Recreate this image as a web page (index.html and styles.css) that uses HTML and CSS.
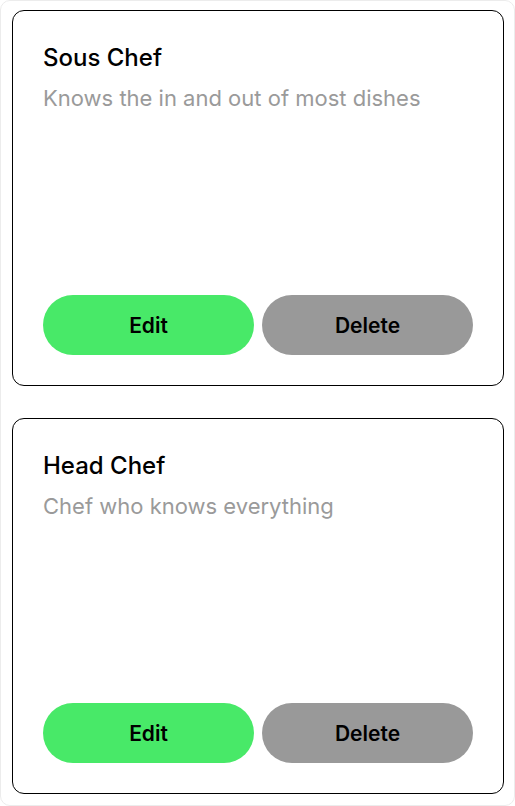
FILE: index.html
```html
<!DOCTYPE html>
<html lang="en">
<head>
<meta charset="UTF-8" />
<meta name="viewport" content="width=device-width, initial-scale=1" />
<title>Roles</title>
<link rel="stylesheet" href="styles.css">
</head>
<body>
  <div class="role-list">
    <div class="role-card">
      <h2 class="role-title">Sous Chef</h2>
      <p class="role-desc">Knows the in and out of most dishes</p>
      <div class="role-actions">
        <button class="btn btn-edit">Edit</button>
        <button class="btn btn-delete">Delete</button>
      </div>
    </div>
    <div class="role-card">
      <h2 class="role-title">Head Chef</h2>
      <p class="role-desc">Chef who knows everything</p>
      <div class="role-actions">
        <button class="btn btn-edit">Edit</button>
        <button class="btn btn-delete">Delete</button>
      </div>
    </div>
  </div>
</body>
</html>
```
FILE: styles.css
```css
body {
  margin: 0;
  font-family: Inter, 'Noto Sans', sans-serif;
  background: #fff;
}
.role-list {
  box-sizing: border-box;
  height: 806px;
  border: 1px solid #ececec;
  border-radius: 10px;
  padding: 9px 10px 11px 11px;
  display: flex;
  flex-direction: column;
  gap: 32px;
}
.role-card {
  box-sizing: border-box;
  height: 376px;
  border: 1px solid #000;
  border-radius: 12px;
  padding: 30px;
  display: flex;
  flex-direction: column;
}
.role-title {
  margin: 0;
  font-size: 24px;
  font-weight: 500;
  line-height: 34px;
  color: #000;
}
.role-desc {
  margin: 7px 0 0;
  font-size: 22px;
  line-height: 32px;
  color: #9a9a9a;
}
.role-actions {
  margin-top: auto;
  display: flex;
  gap: 8px;
}
.btn {
  flex: 1;
  height: 60px;
  border: none;
  border-radius: 30px;
  font-family: inherit;
  font-size: 21px;
  font-weight: 600;
  color: #000;
  cursor: pointer;
}
.btn-edit {
  background-color: #48e968;
}
.btn-delete {
  background-color: #999;
}
```
